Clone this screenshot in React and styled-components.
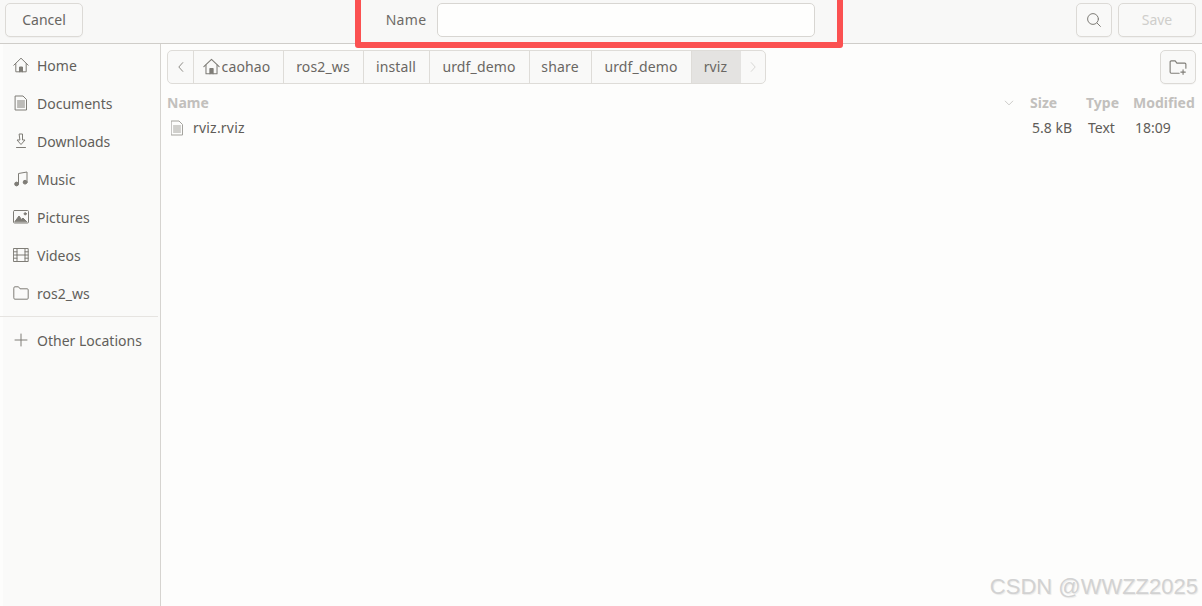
import React from 'react';
import styled, { createGlobalStyle } from 'styled-components';

const GlobalStyle = createGlobalStyle`
  html, body {
    margin: 0;
    padding: 0;
    height: 100%;
    background: #fdfdfc;
    font-family: "Noto Sans", "Open Sans", sans-serif;
    font-size: 14px;
    color: #5f5c58;
    overflow: hidden;
  }
  #root {
    height: 100%;
  }
`;

const Icon = ({ size = 16, children }) => (
  <svg
    width={size}
    height={size}
    viewBox='0 0 16 16'
    fill='none'
    stroke='#7f7d77'
    strokeWidth='1'
    strokeLinecap='round'
    strokeLinejoin='round'>
    {children}
  </svg>
);

const icons = {
  home: (
    <>
      <path d='M0.8 8.2 8 1.2l7.2 7' />
      <path d='M2.8 6.6v8.2h10.4V6.6' />
      <path d='M6.5 14.8V10h3v4.8' fill='#7f7d77' />
    </>
  ),
  doc: (
    <>
      <path d='M2.5 1h7.5l3.5 3.5v10.5h-11z' />
      <path d='M4.5 6h7M4.5 8h7M4.5 10h7M4.5 12h7' />
    </>
  ),
  download: (
    <>
      <path d='M6.5 1h3v6h2.5L8 11.5 4 7h2.5z' />
      <path d='M3.5 14.5h9' />
    </>
  ),
  music: (
    <>
      <path d='M5.5 12.8V2.5l8.5-1.5v10' />
      <circle cx='3.6' cy='13' r='1.9' fill='#7f7d77' />
      <circle cx='12.1' cy='11.2' r='1.9' fill='#7f7d77' />
    </>
  ),
  picture: (
    <>
      <rect x='0.5' y='1.5' width='15' height='12.5' rx='1' />
      <path d='M2 12.5 6 7l2.5 3.5L10 9l3.5 3.5z' fill='#7f7d77' />
      <circle cx='12.2' cy='4.8' r='1.1' fill='#7f7d77' />
    </>
  ),
  film: (
    <>
      <rect x='0.8' y='1.5' width='14.4' height='13' />
      <path d='M4 1.5v13M12 1.5v13M4 8h8M0.8 4.8H4M0.8 8H4M0.8 11.2H4M12 4.8h3.2M12 8h3.2M12 11.2h3.2' />
    </>
  ),
  folder: <path d='M0.8 2.8a1 1 0 0 1 1-1h3.7l1.5 2h7.2a1 1 0 0 1 1 1v8.4a1 1 0 0 1-1 1H1.8a1 1 0 0 1-1-1z' />,
  plus: <path d='M8 2v12M2 8h12' />,
  search: (
    <>
      <circle cx='7' cy='7' r='5.4' />
      <path d='m11 11 3.4 3.4' />
    </>
  ),
  newFolder: (
    <>
      <path d='M9 13.5H2a1 1 0 0 1-1-1v-9a1 1 0 0 1 1-1h3.5l1.5 2h7a1 1 0 0 1 1 1V9' />
      <path d='M12.5 10.5v4M10.5 12.5h4' />
    </>
  ),
  left: <path d='M10 3 5.5 8l4.5 5' />,
  right: <path d='m6 3 4.5 5L6 13' />,
  down: <path d='m3 5.5 5 5 5-5' />,
};

const places = [
  { name: 'Home', icon: 'home' },
  { name: 'Documents', icon: 'doc' },
  { name: 'Downloads', icon: 'download' },
  { name: 'Music', icon: 'music' },
  { name: 'Pictures', icon: 'picture' },
  { name: 'Videos', icon: 'film' },
  { name: 'ros2_ws', icon: 'folder' },
];

const crumbs = [
  { name: 'caohao', width: 90, icon: 'home' },
  { name: 'ros2_ws', width: 80 },
  { name: 'install', width: 66 },
  { name: 'urdf_demo', width: 100 },
  { name: 'share', width: 62 },
  { name: 'urdf_demo', width: 100 },
  { name: 'rviz', width: 50, active: true },
];

const App = () => {
  return (
    <>
      <GlobalStyle />
      <Window>
        <Header>
          <HeaderLeft>
            <Button $width={78}>Cancel</Button>
          </HeaderLeft>
          <NameGroup>
            <NameLabel>Name</NameLabel>
            <NameInput type='text' />
          </NameGroup>
          <HeaderRight>
            <Button $width={36}>
              <Icon>{icons.search}</Icon>
            </Button>
            <Button $width={78} $disabled>
              Save
            </Button>
          </HeaderRight>
          <Highlight />
        </Header>
        <Body>
          <Sidebar>
            <PlaceList>
              {places.map((p) => (
                <Place key={p.name}>
                  <Icon>{icons[p.icon]}</Icon>
                  {p.name}
                </Place>
              ))}
            </PlaceList>
            <Separator />
            <Place>
              <Icon>{icons.plus}</Icon>
              Other Locations
            </Place>
          </Sidebar>
          <Main>
            <PathRow>
              <PathBar>
                <PathArrow>
                  <Icon size={14}>{icons.left}</Icon>
                </PathArrow>
                {crumbs.map((c, i) => (
                  <Crumb key={i} $width={c.width} $active={c.active}>
                    {c.icon && <Icon size={17}>{icons[c.icon]}</Icon>}
                    {c.name}
                  </Crumb>
                ))}
                <PathArrow $dim>
                  <Icon size={14}>{icons.right}</Icon>
                </PathArrow>
              </PathBar>
              <Button $width={36} $height={34}>
                <Icon size={18}>{icons.newFolder}</Icon>
              </Button>
            </PathRow>
            <FileGrid>
              <ColName>
                Name
                <SortIcon>
                  <Icon size={12}>{icons.down}</Icon>
                </SortIcon>
              </ColName>
              <ColTitle>Size</ColTitle>
              <ColTitle>Type</ColTitle>
              <ColTitle>Modified</ColTitle>
              <FileName>
                <FileIcon>
                  <Icon>{icons.doc}</Icon>
                </FileIcon>
                rviz.rviz
              </FileName>
              <FileCell>5.8 kB</FileCell>
              <FileCell>Text</FileCell>
              <FileCell>18:09</FileCell>
            </FileGrid>
          </Main>
        </Body>
        <Watermark>CSDN @WWZZ2025</Watermark>
      </Window>
    </>
  );
};

const Window = styled.div`
  position: relative;
  display: flex;
  flex-direction: column;
  height: 606px;
  overflow: hidden;
`;

const Header = styled.div`
  position: relative;
  display: grid;
  grid-template-columns: 1fr auto 1fr;
  align-items: center;
  height: 44px;
  padding: 3px 6px 6px 5px;
  box-sizing: border-box;
  background: #f8f8f7;
  border-bottom: 1px solid #cfcdc9;
  flex: none;
`;
const HeaderLeft = styled.div`
  display: flex;
`;
const HeaderRight = styled.div`
  display: flex;
  justify-content: flex-end;
  gap: 6px;
`;
const Button = styled.div`
  display: flex;
  align-items: center;
  justify-content: center;
  width: ${(p) => p.$width}px;
  height: ${(p) => p.$height || 34}px;
  padding-bottom: 1px;
  box-sizing: border-box;
  background: #f9f9f8;
  border: 1px solid #dcdad6;
  border-radius: 5px;
  color: ${(p) => (p.$disabled ? '#cfcecb' : '#686662')};
  box-shadow: 0 1px 1px rgba(0, 0, 0, 0.03);
`;
const NameGroup = styled.div`
  display: flex;
  align-items: center;
  gap: 11px;
`;
const NameLabel = styled.div`
  color: #6d6a66;
  letter-spacing: 0.3px;
  margin-bottom: 1px;
`;
const NameInput = styled.input`
  width: 378px;
  height: 34px;
  padding: 0;
  box-sizing: border-box;
  background: #fefefd;
  border: 1px solid #d8d6d2;
  border-radius: 5px;
  outline: none;
`;
const Highlight = styled.div`
  position: absolute;
  left: 355px;
  top: -6px;
  width: 488px;
  height: 54px;
  box-sizing: border-box;
  border: 6px solid #fb5151;
  border-radius: 3px;
  pointer-events: none;
`;

const Body = styled.div`
  display: flex;
  flex: 1;
  min-height: 0;
`;
const Sidebar = styled.div`
  width: 161px;
  flex: none;
  box-sizing: border-box;
  padding-top: 2px;
  background: #fafaf9;
  border-right: 1px solid #d6d4d0;
  box-shadow: inset 3px 0 0 #fdfdfc;
`;
const PlaceList = styled.div`
  display: flex;
  flex-direction: column;
`;
const Place = styled.div`
  display: flex;
  align-items: center;
  gap: 8px;
  height: 38px;
  padding-left: 13px;
  color: #625f5b;
  svg {
    flex: none;
  }
`;
const Separator = styled.div`
  height: 1px;
  margin: 4px 2px 4px 0;
  background: #e6e4e1;
`;

const Main = styled.div`
  flex: 1;
  min-width: 0;
  padding: 6px 6px 0 6px;
`;
const PathRow = styled.div`
  display: flex;
  justify-content: space-between;
`;
const PathBar = styled.div`
  display: flex;
  height: 34px;
  box-sizing: border-box;
  border: 1px solid #dedcd8;
  border-radius: 5px;
  background: #f9f9f8;
  overflow: hidden;
`;
const PathArrow = styled.div`
  display: flex;
  align-items: center;
  justify-content: center;
  width: 25px;
  opacity: ${(p) => (p.$dim ? 0.3 : 1)};
  &:last-child {
    width: 24px;
  }
`;
const Crumb = styled.div`
  display: flex;
  align-items: center;
  justify-content: center;
  gap: 2px;
  width: ${(p) => p.$width}px;
  box-sizing: border-box;
  border-left: 1px solid #dedcd8;
  padding-right: ${(p) => (p.$active ? 2 : 1)}px;
  padding-bottom: 1px;
  background: ${(p) => (p.$active ? '#e4e3e1' : 'transparent')};
  color: #6a6763;
  letter-spacing: 0.15px;
  svg {
    margin-left: -3px;
  }
`;

const FileGrid = styled.div`
  display: grid;
  grid-template-columns: 1fr 56px 47px 63px;
  grid-template-rows: 25px 25px;
  align-items: center;
  margin-top: 6px;
`;
const ColName = styled.div`
  display: flex;
  justify-content: space-between;
  align-items: center;
  padding-right: 15px;
  font-weight: 700;
  color: #c2c0bd;
`;
const SortIcon = styled.span`
  display: flex;
  opacity: 0.5;
`;
const ColTitle = styled.div`
  font-weight: 700;
  color: #c2c0bd;
`;
const FileName = styled.div`
  display: flex;
  align-items: center;
  gap: 8px;
  padding-left: 2px;
  color: #5f5c58;
  letter-spacing: 0.2px;
`;
const FileIcon = styled.span`
  display: flex;
  opacity: 0.7;
`;
const FileCell = styled.div`
  padding-left: 2px;
  color: #5f5c58;
`;

const Watermark = styled.div`
  position: absolute;
  right: 4px;
  bottom: 6px;
  font-family: "Liberation Sans", Arial, sans-serif;
  font-size: 22px;
  color: #d2d2d2;
  text-shadow: 1px 1px 1px rgba(0, 0, 0, 0.08);
`;

export default App;
